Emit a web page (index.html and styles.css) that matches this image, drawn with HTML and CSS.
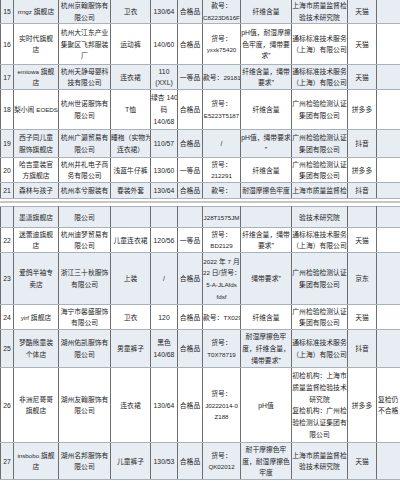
FILE: index.html
```html
<!DOCTYPE html>
<html lang="zh">
<head>
<meta charset="utf-8">
<link rel="stylesheet" href="styles.css">
</head>
<body>
<div class="sheet">
<table class="grid first">
<colgroup>
<col class="c1"><col class="c2"><col class="c3"><col class="c4"><col class="c5"><col class="c6"><col class="c7"><col class="c8"><col class="c9"><col class="c10"><col class="c11">
</colgroup>
<tr class="alt h24">
<td>15</td><td><span class="n">rrngz</span> 旗舰店</td><td>杭州京翰服饰有<br>限公司</td><td>卫衣</td><td>130/64</td><td>合格品</td><td>款号：<br><span class="n">C8223D616F</span></td><td>纤维含量</td><td>上海市质量监督检<br>验技术研究院</td><td>天猫</td><td></td>
</tr>
<tr class="h41">
<td>16</td><td>实时代旗舰<br>店</td><td>杭州大江东产业<br>集聚区飞邦服装<br>厂</td><td>运动裤</td><td>140/60</td><td>合格品</td><td>货号：<br><span class="n">yxxk75420</span></td><td>pH值，耐湿摩擦<br>色牢度，绳带要<br>求”</td><td>通标标准技术服务<br>（上海）有限公司</td><td>天猫</td><td></td>
</tr>
<tr class="alt h25">
<td>17</td><td><span class="n">emiowa</span> 旗舰<br>店</td><td>杭州天静母婴科<br>技有限公司</td><td>连衣裙</td><td>110<br>(XXL)</td><td>一等品</td><td>款号：<span class="n">29181</span></td><td>纤维含量，绳带<br>要求”</td><td>通标标准技术服务<br>（上海）有限公司</td><td>天猫</td><td></td>
</tr>
<tr class="h40">
<td>18</td><td>梨小闹 <span class="n">EOEDS</span></td><td>杭州世诺服饰有<br>限公司</td><td>T恤</td><td>绿杏 140<br>码<br>140/68</td><td>合格品</td><td>货号：<br><span class="n">E5223T5187</span></td><td>纤维含量</td><td>广州检验检测认证<br>集团有限公司</td><td>拼多多</td><td></td>
</tr>
<tr class="alt h28">
<td>19</td><td>西子同儿童<br>服饰旗舰店</td><td>杭州广灏贸易有<br>限公司</td><td>睡袍（实物为<br>连衣裙）</td><td>110/57</td><td>合格品</td><td>/</td><td>pH值，绳带要求<br>”</td><td>广州检验检测认证<br>集团有限公司</td><td>抖音</td><td></td>
</tr>
<tr class="h25">
<td>20</td><td>哈吉童装官<br>方旗舰店</td><td>杭州井礼电子商<br>务有限公司</td><td>浅蓝牛仔裤</td><td>130/60</td><td>一等品</td><td>货号：<br><span class="n">212291</span></td><td>纤维含量</td><td>广州检验检测认证<br>集团有限公司</td><td>拼多多</td><td></td>
</tr>
<tr class="alt h16">
<td>21</td><td>森林与孩子</td><td>杭州本兮服装有</td><td>春装外套</td><td>130/64</td><td>合格品</td><td>款号：</td><td>耐湿摩擦色牢度</td><td>上海市质量监督检</td><td>抖音</td><td></td>
</tr>
</table>
<div class="sep"></div>
<table class="grid second">
<colgroup>
<col class="c1"><col class="c2"><col class="c3"><col class="c4"><col class="c5"><col class="c6"><col class="c7"><col class="c8"><col class="c9"><col class="c10"><col class="c11">
</colgroup>
<tr class="alt h21">
<td></td><td>墨潇旗舰店</td><td>限公司</td><td></td><td></td><td></td><td><span class="n">J28T1575JM</span></td><td></td><td>验技术研究院</td><td></td><td></td>
</tr>
<tr class="h25">
<td>22</td><td>迷蕾迪旗舰<br>店</td><td>杭州迪梦贸易有<br>限公司</td><td>儿童连衣裙</td><td>120/56</td><td>一等品</td><td>货号：<br><span class="n">BD2129</span></td><td>纤维含量，绳带<br>要求”</td><td>通标标准技术服务<br>（上海）有限公司</td><td>天猫</td><td></td>
</tr>
<tr class="alt h52">
<td>23</td><td>爱鸽半袖专<br>卖店</td><td>浙江三十秋服饰<br>有限公司</td><td>上装</td><td>/</td><td>合格品</td><td><span class="n">2022</span> 年 <span class="n">7</span> 月<br><span class="n">22</span> 日/货号：<br><span class="n">5-A-JLAfds</span><br><span class="n">fdsf</span></td><td>绳带要求”</td><td>广州检验检测认证<br>集团有限公司</td><td>京东</td><td></td>
</tr>
<tr class="h25">
<td>24</td><td><span class="n">yirf</span> 旗舰店</td><td>海宁市馨盛服饰<br>有限公司</td><td>卫衣</td><td>120</td><td>合格品</td><td>款号：<span class="n">TX029</span></td><td>纤维含量</td><td>广州检验检测认证<br>集团有限公司</td><td>天猫</td><td></td>
</tr>
<tr class="alt h38">
<td>25</td><td>梦酷熊童装<br>个体店</td><td>湖州佑凯服饰有<br>限公司</td><td>男童裤子</td><td>黑色<br>140/68</td><td>合格品</td><td>货号：<br><span class="n">T0X78719</span></td><td>耐湿摩擦色牢<br>度，纤维含量，<br>绳带要求”</td><td>通标标准技术服务<br>（上海）有限公司</td><td>抖音</td><td></td>
</tr>
<tr class="h75">
<td>26</td><td>非洲尼哥哥<br>旗舰店</td><td>湖州友翰服饰有<br>限公司</td><td>连衣裙</td><td>130/64</td><td>合格品</td><td>货号：<br><span class="n">J0222014-0</span><br><span class="n">Z188</span></td><td>pH值</td><td>初检机构：上海市<br>质量监督检验技术<br>研究院<br>复检机构：广州检<br>验检测认证集团有<br>限公司</td><td>拼多多</td><td class="left">复检仍<br>不合格</td>
</tr>
<tr class="alt h37">
<td>27</td><td><span class="n">insbobo</span> 旗舰<br>店</td><td>湖州名邦服饰有<br>限公司</td><td>儿童裤子</td><td>130/53</td><td>合格品</td><td>货号：<br><span class="n">QK02012</span></td><td>耐干摩擦色牢<br>度，耐湿摩擦色<br>牢度</td><td>上海市质量监督检<br>验技术研究院</td><td>天猫</td><td></td>
</tr>
</table>
</div>
</body>
</html>
```
FILE: styles.css
```css
html, body {
  margin: 0;
  padding: 0;
  overflow: hidden;
  background: #ffffff;
}
body {
  width: 400px;
  height: 481px;
  font-family: "Liberation Sans", "Noto Sans CJK SC", sans-serif;
  font-size: 6.8px;
  color: #262626;
}
.sheet {
  width: 420px;
}
.grid {
  border-collapse: collapse;
  table-layout: fixed;
  width: 420px;
}
.first {
  margin-top: -1px;
}
.grid td {
  border-left: 1px solid #6e6e6e;
  border-right: 1px solid #6e6e6e;
  border-top: 1px solid #a9b1bb;
  border-bottom: 1px solid #a9b1bb;
  padding: 0;
  text-align: center;
  vertical-align: middle;
  line-height: 11.7px;
  white-space: nowrap;
  overflow: hidden;
}
.grid td.left {
  text-align: left;
  padding-left: 1px;
}
.n {
  font-size: 6.2px;
}
.grid tr.alt td {
  background: #e8edf4;
}
.sep {
  height: 2px;
  background: #c6c6c6;
  margin: 2px 0 3px;
}
.c1 { width: 13px; }
.c2 { width: 45px; }
.c3 { width: 52px; }
.c4 { width: 40px; }
.c5 { width: 27px; }
.c6 { width: 25px; }
.c7 { width: 38px; }
.c8 { width: 51px; }
.c9 { width: 56px; }
.c10 { width: 29px; }
.c11 { width: 44px; }
.h16 { height: 16px; }
.h21 { height: 21px; }
.h24 { height: 24px; }
.h25 { height: 25px; }
.h28 { height: 28px; }
.h37 { height: 37px; }
.h38 { height: 38px; }
.h40 { height: 40px; }
.h41 { height: 41px; }
.h52 { height: 52px; }
.h75 { height: 75px; }
```
